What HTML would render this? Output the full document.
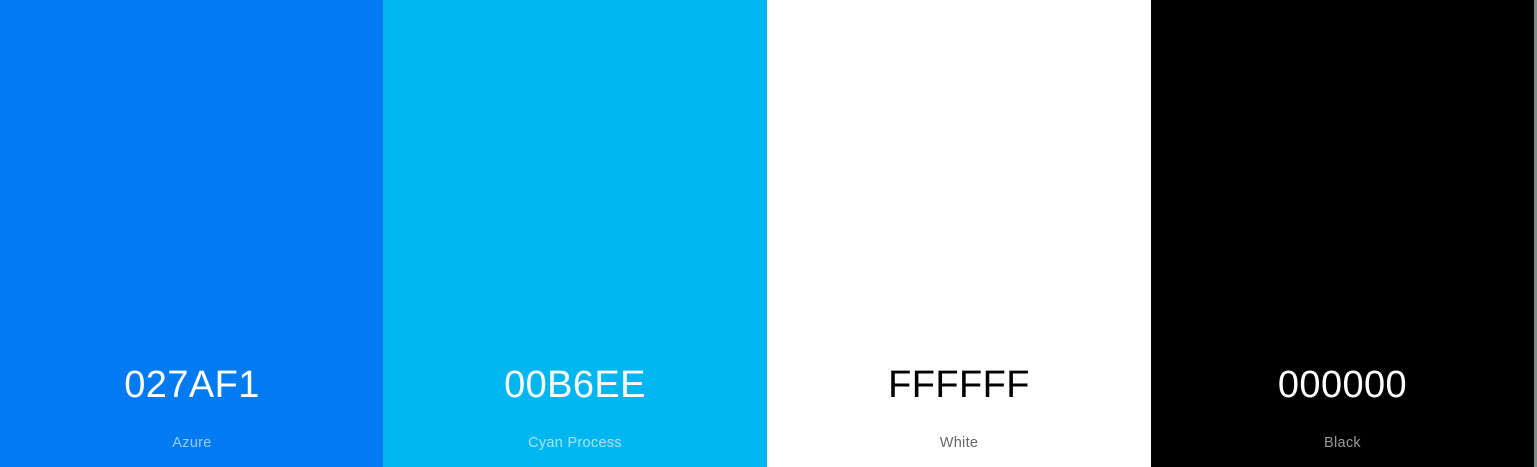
<!DOCTYPE html>
<html><head><style>
html,body{margin:0;padding:0;width:1537px;height:467px;overflow:hidden;background:#7a8a85;font-family:"Liberation Sans",sans-serif}
.c{position:absolute;top:0;height:467px;width:384px}
.h{position:absolute;left:0;right:0;top:363px;text-align:center;font-size:38px;line-height:44px;letter-spacing:0.4px}
.n{position:absolute;left:0;right:0;top:434px;text-align:center;font-size:14.5px;line-height:18px;letter-spacing:0.3px}
</style></head><body>
<div class="c" style="left:0;background:#027af1;color:#fff"><div class="h">027AF1</div><div class="n" style="color:rgba(255,255,255,.6)">Azure</div></div>
<div class="c" style="left:383px;background:#00b6ee;color:#fff"><div class="h">00B6EE</div><div class="n" style="color:rgba(255,255,255,.65)">Cyan Process</div></div>
<div class="c" style="left:767px;background:#fff;color:#000"><div class="h">FFFFFF</div><div class="n" style="color:#666">White</div></div>
<div class="c" style="left:1151px;width:383px;background:#000;color:#fff"><div class="h">000000</div><div class="n" style="color:#999">Black</div></div>
</body></html>
